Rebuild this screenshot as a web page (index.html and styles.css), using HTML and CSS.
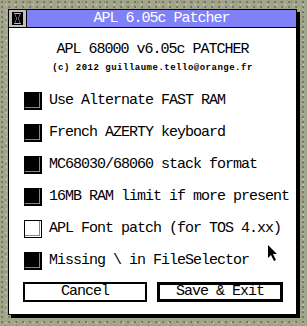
FILE: index.html
```html
<!DOCTYPE html>
<html lang="en">

<head>
    <meta charset="UTF-8">
    <meta name="viewport" content="width=device-width, initial-scale=1.0">
    <title>APL 6.05c Patcher</title>
    <link rel="stylesheet" href="styles.css">
</head>

<body>
    <div class="window">
        <div class="titlebar">
            <div class="closer">
                <svg width="17" height="17" viewBox="0 0 17 17">
                    <rect x="3" y="2" width="11" height="13" fill="#000" />
                    <path d="M5 3h7l-2.5 5.5 2.5 5.5h-7l2.5-5.5z" fill="#c0c0c0" />
                    <path d="M6 4h5l-2 4.5 2 4.5h-5l2-4.5z" fill="#000" />
                </svg>
            </div>
            <div class="title">APL 6.05c Patcher</div>
        </div>
        <div class="content">
            <div class="heading">APL 68000 v6.05c PATCHER</div>
            <div class="copy">(c) 2012 guillaume.tello@orange.fr</div>
            <ul class="options">
                <li><span class="check on"></span>Use Alternate FAST RAM</li>
                <li><span class="check on"></span>French AZERTY keyboard</li>
                <li><span class="check on"></span>MC68030/68060 stack format</li>
                <li><span class="check on"></span>16MB RAM limit if more present</li>
                <li><span class="check"></span>APL Font patch (for TOS 4.xx)</li>
                <li><span class="check on"></span>Missing \ in FileSelector</li>
            </ul>
            <div class="buttons">
                <button class="btn">Cancel</button>
                <button class="btn default">Save &amp; Exit</button>
            </div>
        </div>
    </div>
    <svg class="cursor" width="12" height="18" viewBox="0 0 12 18">
        <path d="M0 0v13l3-3 3 6 2-1-3-6h4z" fill="#000" />
    </svg>
</body>

</html>
```

FILE: styles.css
```css
* {
    margin: 0;
    padding: 0;
    box-sizing: border-box;
}

body {
    width: 307px;
    height: 326px;
    overflow: hidden;
    position: relative;
    padding: 9px 0 0 8px;
    background-color: #a3a58b;
    background-image:
        radial-gradient(circle at 30% 40%, #6e6f5c 0.6px, transparent 1.2px),
        radial-gradient(circle at 70% 80%, #c4c5ae 0.6px, transparent 1.2px),
        radial-gradient(circle at 50% 20%, #85866f 0.6px, transparent 1.2px);
    background-size: 7px 5px, 9px 6px, 11px 9px;
    font-family: "Liberation Mono", "DejaVu Sans Mono", monospace;
    font-size: 15px;
    letter-spacing: -1px;
    color: #000;
}

.window {
    width: 289px;
    height: 306px;
    background: #fff;
    border: 1px solid #000;
    box-shadow: 3px 3px 0 #000;
}

.titlebar {
    display: flex;
    height: 18px;
    border-bottom: 1px solid #000;
}

.closer {
    width: 18px;
    background: #c0c0c0;
    border-right: 1px solid #000;
}

.closer svg {
    display: block;
}

.title {
    flex: 1;
    background: #8080f8;
    color: #fff;
    text-align: center;
    line-height: 17px;
}

.content {
    padding: 14px 0 0 15px;
}

.heading {
    text-align: center;
    line-height: 16px;
    padding-right: 15px;
}

.copy {
    text-align: center;
    padding-right: 15px;
    font-size: 9px;
    font-weight: bold;
    letter-spacing: 0.5px;
    line-height: 12px;
    margin-top: 4px;
}

.options {
    list-style: none;
    margin-top: 18px;
    display: flex;
    flex-direction: column;
    gap: 15px;
}

.options li {
    display: flex;
    align-items: center;
    height: 17px;
    line-height: 17px;
}

.check {
    width: 18px;
    height: 18px;
    margin-right: 7px;
    border: 1px solid #000;
    background: #fff;
    box-shadow: inset -1px -1px 0 #fff, inset -2px -2px 0 #888;
}

.check.on {
    background: #000;
    box-shadow: inset -1px -1px 0 #000, inset -2px -2px 0 #888;
}

.buttons {
    display: flex;
    gap: 11px;
    margin-top: 13px;
    padding-left: -1px;
}

.btn {
    height: 20px;
    width: 124px;
    margin-left: -1px;
    background: #fff;
    border: 2px solid #000;
    font: inherit;
    letter-spacing: -1px;
    line-height: 16px;
}

.btn.default {
    width: 126px;
    border-width: 3px;
    line-height: 14px;
}

.cursor {
    position: absolute;
    left: 268px;
    top: 245px;
}
```
